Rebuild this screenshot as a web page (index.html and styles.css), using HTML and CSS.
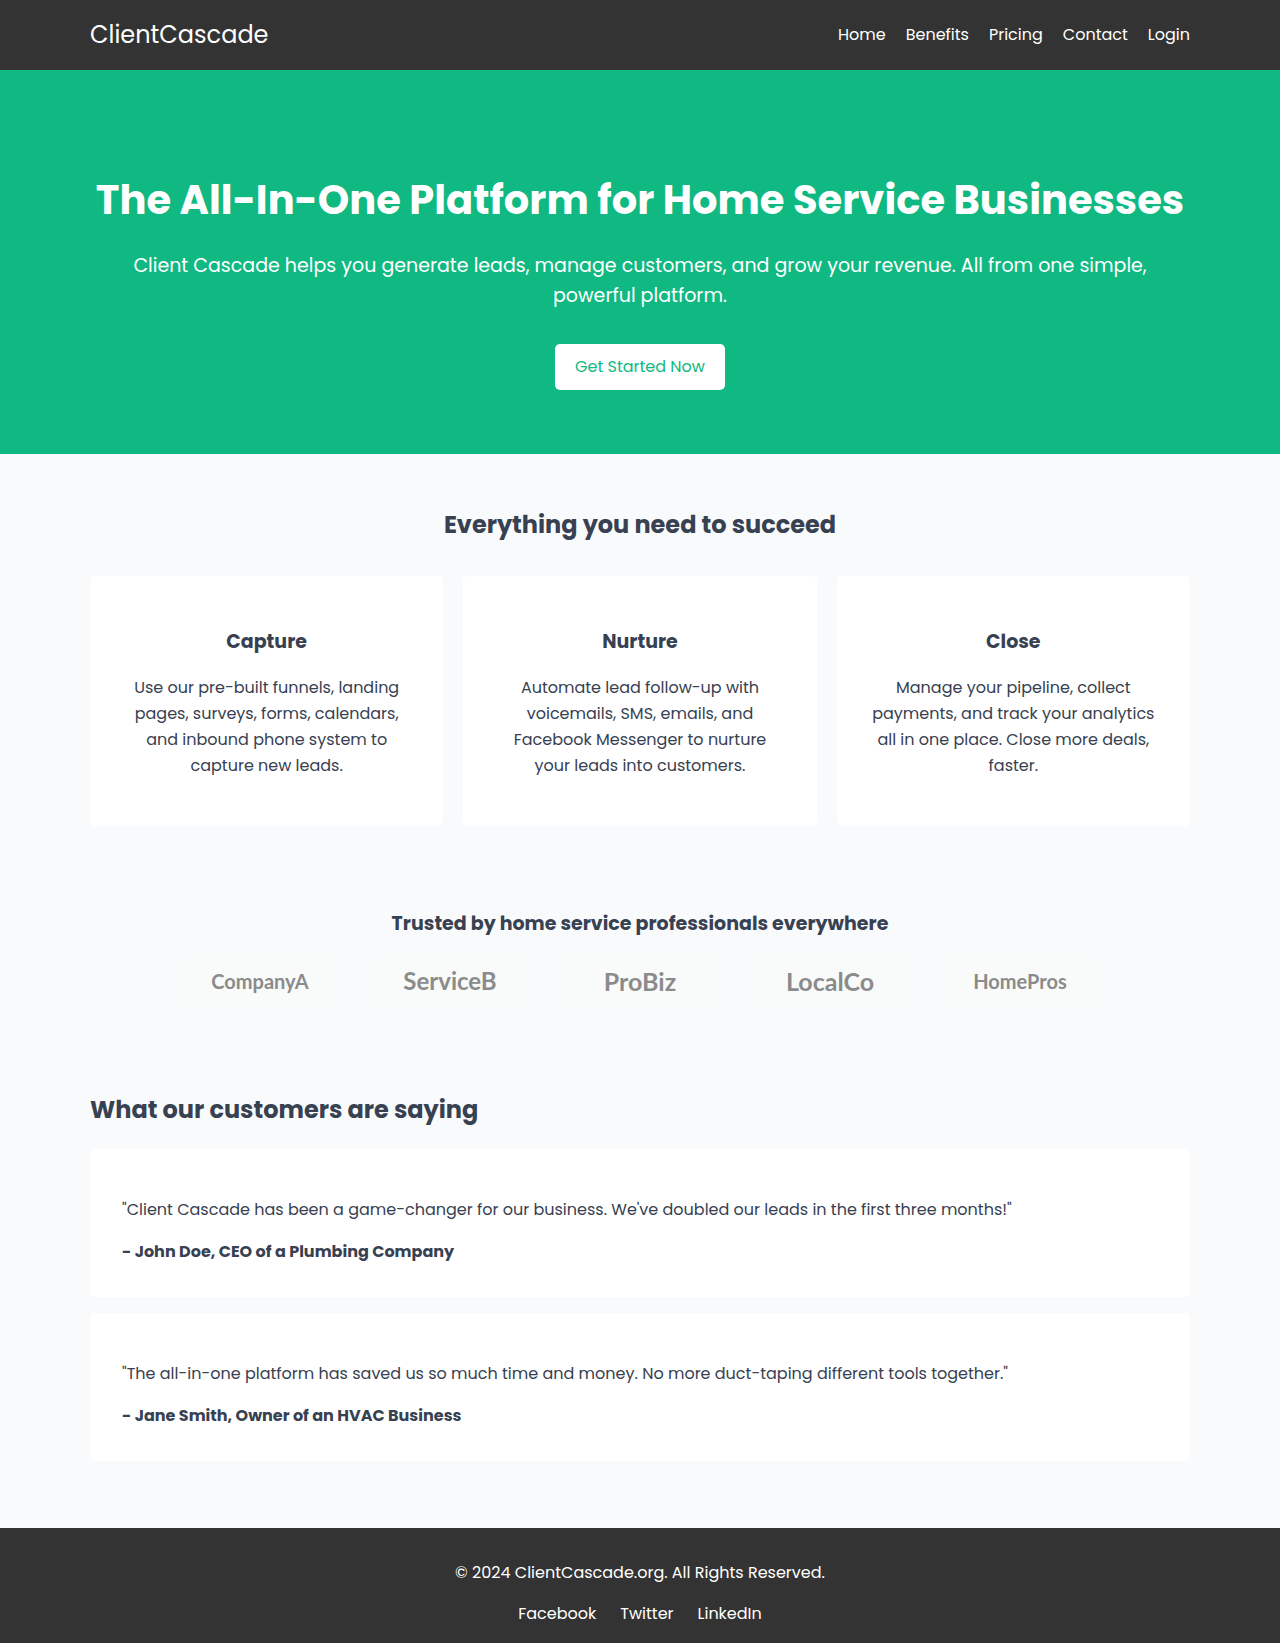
FILE: index.html
```html
<!DOCTYPE html>
<html lang="en">
<head>
<meta charset="utf-8">
<meta name="viewport" content="width=device-width, initial-scale=1">
<title>ClientCascade</title>
<link rel="stylesheet" href="styles.css">
</head>
<body>
<header class="site-header">
  <div class="container header-row">
    <a class="brand" href="#">ClientCascade</a>
    <nav class="main-nav">
      <a href="#">Home</a>
      <a href="#benefits">Benefits</a>
      <a href="#">Pricing</a>
      <a href="#">Contact</a>
      <a href="#">Login</a>
    </nav>
  </div>
</header>

<section class="hero">
  <div class="container">
    <h1>The All-In-One Platform for Home Service Businesses</h1>
    <p>Client Cascade helps you generate leads, manage customers, and grow your revenue. All from one simple, powerful platform.</p>
    <a class="cta" href="#">Get Started Now</a>
  </div>
</section>

<main class="container">
  <section class="benefits" id="benefits">
    <h2>Everything you need to succeed</h2>
    <div class="cards">
      <article class="card">
        <h3>Capture</h3>
        <p>Use our pre-built funnels, landing pages, surveys, forms, calendars, and inbound phone system to capture new leads.</p>
      </article>
      <article class="card">
        <h3>Nurture</h3>
        <p>Automate lead follow-up with voicemails, SMS, emails, and Facebook Messenger to nurture your leads into customers.</p>
      </article>
      <article class="card">
        <h3>Close</h3>
        <p>Manage your pipeline, collect payments, and track your analytics all in one place. Close more deals, faster.</p>
      </article>
    </div>
  </section>

  <section class="trusted">
    <h3>Trusted by home service professionals everywhere</h3>
    <div class="logos">
      <span class="logo logo-small">CompanyA</span>
      <span class="logo logo-medium">ServiceB</span>
      <span class="logo">ProBiz</span>
      <span class="logo">LocalCo</span>
      <span class="logo logo-small">HomePros</span>
    </div>
  </section>

  <section class="testimonials">
    <h2>What our customers are saying</h2>
    <article class="quote">
      <p>"Client Cascade has been a game-changer for our business. We've doubled our leads in the first three months!"</p>
      <p class="author">- John Doe, CEO of a Plumbing Company</p>
    </article>
    <article class="quote">
      <p>"The all-in-one platform has saved us so much time and money. No more duct-taping different tools together."</p>
      <p class="author">- Jane Smith, Owner of an HVAC Business</p>
    </article>
  </section>
</main>

<footer class="site-footer">
  <p>© 2024 ClientCascade.org. All Rights Reserved.</p>
  <nav class="social">
    <a href="#">Facebook</a>
    <a href="#">Twitter</a>
    <a href="#">LinkedIn</a>
  </nav>
</footer>
</body>
</html>
```
FILE: styles.css
```css
* {
  box-sizing: border-box;
}

body {
  margin: 0;
  background: #f9fafc;
  color: #374151;
  font-family: Poppins, Inter, sans-serif;
  font-size: 16px;
  line-height: 26px;
}

h1, h2, h3, p {
  margin: 0;
}

a {
  color: inherit;
  text-decoration: none;
}

.container {
  max-width: 1140px;
  margin: 0 auto;
  padding: 0 20px;
}

.site-header {
  padding: 16px 0;
  background: #333;
  color: #fff;
}

.header-row {
  display: flex;
  align-items: center;
  justify-content: space-between;
}

.brand {
  font-size: 24px;
  line-height: 38px;
}

.main-nav {
  display: flex;
  gap: 20px;
}

.hero {
  padding: 98px 0 64px;
  background: #10b981;
  color: #fff;
  text-align: center;
}

.hero h1 {
  font-size: 40px;
  line-height: 64px;
}

.hero p {
  margin: 19px 0 33px;
  font-size: 19px;
  line-height: 30px;
}

.cta {
  display: inline-block;
  padding: 10px 20px;
  border-radius: 5px;
  background: #fff;
  color: #10b981;
}

h2 {
  font-size: 24px;
  line-height: 38px;
}

h3 {
  font-size: 19px;
  line-height: 30px;
}

.benefits {
  padding: 52px 0 83px;
  text-align: center;
}

.cards {
  display: grid;
  grid-template-columns: repeat(3, 1fr);
  gap: 20px;
  margin-top: 32px;
}

.card {
  padding: 51px 32px 47px;
  border-radius: 5px;
  background: #fff;
}

.card p {
  margin-top: 18px;
}

.trusted {
  text-align: center;
}

.logos {
  display: flex;
  flex-wrap: wrap;
  justify-content: center;
  gap: 40px;
  margin-top: 17px;
}

.logo {
  width: 150px;
  background: #f9fbfa;
  color: #8b8b8b;
  font-family: Lato, sans-serif;
  font-size: 25px;
  font-weight: 700;
  line-height: 50px;
}

.logo-medium {
  font-size: 24px;
}

.logo-small {
  font-size: 20px;
}

.testimonials {
  padding: 85px 0 67px;
}

.testimonials h2 {
  margin-bottom: 20px;
}

.quote {
  margin-top: 16px;
  padding: 48px 32px 32px;
  border-radius: 5px;
  background: #fff;
}

.author {
  margin-top: 16px;
  font-weight: 700;
}

.site-footer {
  padding: 32px 20px 16px;
  background: #333;
  color: #fff;
  text-align: center;
}

.social {
  display: flex;
  justify-content: center;
  gap: 24px;
  margin-top: 15px;
}
```
